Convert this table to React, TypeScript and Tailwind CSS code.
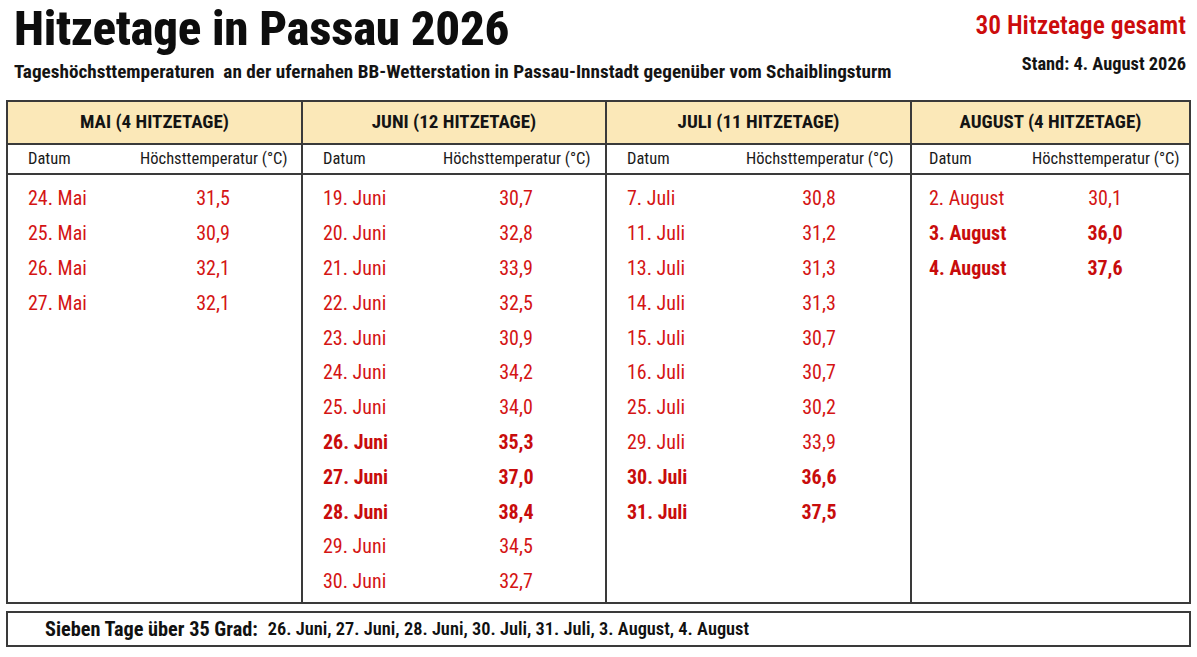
type Row = { d: string; t: string; hot?: boolean };

type Month = {
  title: string;
  pad: string;
  rows: Row[];
};

const months: Month[] = [
  {
    title: 'MAI (4 HITZETAGE)',
    pad: 'pl-5 pr-[15px]',
    rows: [
      { d: '24. Mai', t: '31,5' },
      { d: '25. Mai', t: '30,9' },
      { d: '26. Mai', t: '32,1' },
      { d: '27. Mai', t: '32,1' },
    ],
  },
  {
    title: 'JUNI (12 HITZETAGE)',
    pad: 'pl-5 pr-4',
    rows: [
      { d: '19. Juni', t: '30,7' },
      { d: '20. Juni', t: '32,8' },
      { d: '21. Juni', t: '33,9' },
      { d: '22. Juni', t: '32,5' },
      { d: '23. Juni', t: '30,9' },
      { d: '24. Juni', t: '34,2' },
      { d: '25. Juni', t: '34,0' },
      { d: '26. Juni', t: '35,3', hot: true },
      { d: '27. Juni', t: '37,0', hot: true },
      { d: '28. Juni', t: '38,4', hot: true },
      { d: '29. Juni', t: '34,5' },
      { d: '30. Juni', t: '32,7' },
    ],
  },
  {
    title: 'JULI (11 HITZETAGE)',
    pad: 'pl-5 pr-[18px]',
    rows: [
      { d: '7. Juli', t: '30,8' },
      { d: '11. Juli', t: '31,2' },
      { d: '13. Juli', t: '31,3' },
      { d: '14. Juli', t: '31,3' },
      { d: '15. Juli', t: '30,7' },
      { d: '16. Juli', t: '30,7' },
      { d: '25. Juli', t: '30,2' },
      { d: '29. Juli', t: '33,9' },
      { d: '30. Juli', t: '36,6', hot: true },
      { d: '31. Juli', t: '37,5', hot: true },
    ],
  },
  {
    title: 'AUGUST (4 HITZETAGE)',
    pad: 'pl-[17px] pr-[11px]',
    rows: [
      { d: '2. August', t: '30,1' },
      { d: '3. August', t: '36,0', hot: true },
      { d: '4. August', t: '37,6', hot: true },
    ],
  },
];

function MonthColumn({ m, last }: { m: Month; last: boolean }) {
  return (
    <div className={`flex flex-col ${last ? '' : 'border-r-2 border-[#3a3a3a]'}`}>
      {/* Monat */}
      <div className="h-[43px] bg-[#fbe8b8] border-b-2 border-[#3a3a3a] flex items-center justify-center text-[19px] font-bold text-[#141414]">
        {m.title}
      </div>

      {/* Spaltenköpfe */}
      <div
        className={`h-[30px] border-b-2 border-[#3a3a3a] flex items-center justify-between text-[16.5px] text-[#1a1a1a] ${m.pad}`}
      >
        <span>Datum</span>
        <span className="w-[146px] text-right whitespace-nowrap">Höchsttemperatur (°C)</span>
      </div>

      {/* Werte */}
      <div className={`flex flex-col pt-[6px] ${m.pad}`}>
        {m.rows.map((r) => (
          <div
            key={r.d}
            className={`h-[34.8px] flex items-center justify-between text-[20px] ${
              r.hot ? 'font-bold text-[#c80c0c]' : 'text-[#d41414]'
            }`}
          >
            <span>{r.d}</span>
            <span className="w-[146px] text-center">{r.t}</span>
          </div>
        ))}
      </div>
    </div>
  );
}

export default function App() {
  return (
    <div className="w-[1197px] h-[657px] bg-white font-['Roboto_Condensed',sans-serif] text-[#111] overflow-hidden">
      {/* Kopf */}
      <div className="flex justify-between pl-[14px] pr-[11px] pt-[2px]">
        <div className="flex flex-col">
          <h1 className="text-[49px] leading-[54px] font-extrabold tracking-[-0.3px] text-[#0d0d0d]">
            Hitzetage in Passau 2026
          </h1>
          <p className="text-[19.2px] leading-[22px] font-bold mt-[5px] text-[#141414]">
            Tageshöchsttemperaturen&nbsp; an der ufernahen BB-Wetterstation in Passau-Innstadt gegenüber vom
            Schaiblingsturm
          </p>
        </div>
        <div className="flex flex-col items-end">
          <div className="text-[25.5px] leading-[34px] font-semibold text-[#cc0c0c] mt-[6px]">
            30 Hitzetage gesamt
          </div>
          <div className="text-[18.4px] leading-[22px] font-bold mt-[11px] text-[#141414]">Stand: 4. August 2026</div>
        </div>
      </div>

      {/* Tabelle */}
      <div className="mx-[6px] mt-[17px] w-[1185px] h-[504px] border-2 border-[#3a3a3a] grid grid-cols-[295px_304px_305px_1fr]">
        {months.map((m, i) => (
          <MonthColumn key={m.title} m={m} last={i === months.length - 1} />
        ))}
      </div>

      {/* Fußzeile */}
      <div className="mx-[6px] mt-[7px] w-[1185px] h-[36px] border-2 border-[#3a3a3a] flex items-center pl-[37px] text-[#111]">
        <span className="font-bold text-[20.3px]">Sieben Tage über 35 Grad:</span>
        <span className="font-semibold text-[18.4px] ml-[10px]">
          26. Juni, 27. Juni, 28. Juni, 30. Juli, 31. Juli, 3. August, 4. August
        </span>
      </div>
    </div>
  );
}
